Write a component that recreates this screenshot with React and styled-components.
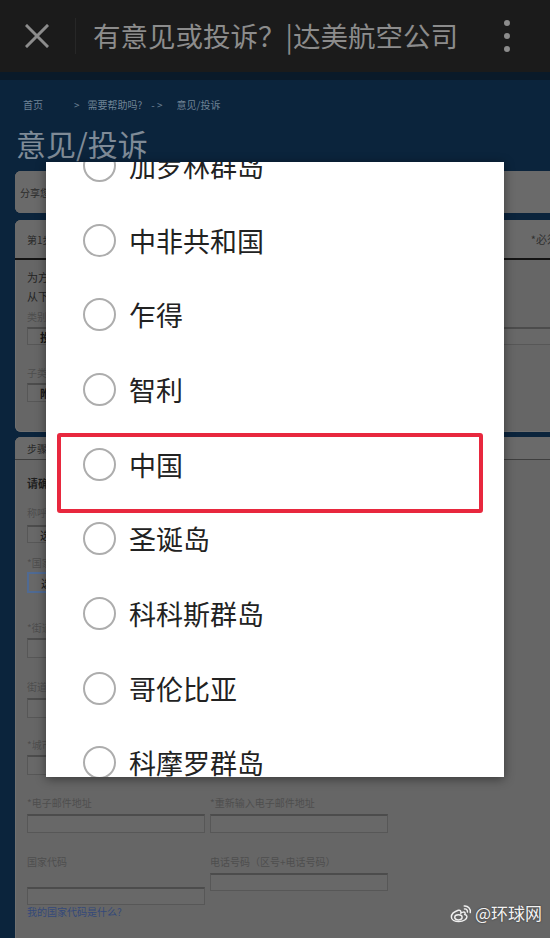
import styled, { createGlobalStyle } from "styled-components";

const GlobalStyle = createGlobalStyle`
  html, body {
    margin: 0;
    padding: 0;
  }
  body {
    font-family: "Noto Sans CJK SC", "Noto Sans", sans-serif;
    background: #0b243c;
  }
`;

const Screen = styled.div`
  position: relative;
  width: 550px;
  height: 938px;
  overflow: hidden;
  background: #0b243c;
`;

const TopBar = styled.header`
  height: 72px;
  background: #1b1b1b;
  border-bottom: 8px solid #0a1a29;
  display: flex;
  align-items: center;
`;

const CloseButton = styled.div`
  margin-left: 25px;
  width: 24px;
  height: 24px;
  display: flex;
`;

const Divider = styled.div`
  width: 1px;
  height: 36px;
  margin-left: 26px;
  background: #272727;
`;

const Title = styled.div`
  margin-left: 17px;
  font-size: 27.5px;
  line-height: 1;
  color: #8c8c8c;
  white-space: nowrap;
`;

const MenuDots = styled.div`
  margin-left: auto;
  margin-right: 40px;
  display: flex;
  flex-direction: column;
  gap: 7px;
  span {
    width: 6px;
    height: 6px;
    border-radius: 50%;
    background: #8c8c8c;
  }
`;

const Page = styled.main`
  padding-top: 18px;
`;

const Crumbs = styled.nav`
  display: flex;
  padding-left: 23px;
  font-size: 10px;
  line-height: 14px;
  color: #6f8396;
  white-space: nowrap;
`;

const Crumb = styled.span`
  margin-right: ${(p) => p.$gap || 0}px;
`;

const PageTitle = styled.h1`
  margin: 13px 0 0 16px;
  font-size: 30px;
  line-height: 36px;
  font-weight: 400;
  color: #7f8b97;
`;

const Panel = styled.section`
  margin: 10px 0 0 15px;
  width: 580px;
`;

const Card = styled.div`
  margin-top: ${(p) => p.$mt || 0}px;
  background: #666666;
  border-radius: 6px;
  box-shadow: inset 0 0 0 1px #6f6f6f;
  overflow: hidden;
`;

const CardHead = styled.div`
  height: ${(p) => p.$h}px;
  display: flex;
  align-items: center;
  justify-content: space-between;
  padding: 0 15px 0 ${(p) => p.$pad}px;
  background: #6a6a6a;
  border-bottom: ${(p) => p.$line || "none"};
  font-size: 10px;
  color: #2a2a2a;
  white-space: nowrap;
`;

const Required = styled.span`
  font-size: 11px;
  color: #303030;
`;

const CardBody = styled.div`
  padding: ${(p) => p.$pt}px 12px ${(p) => p.$pb}px 12px;
`;

const Intro = styled.p`
  margin: 0;
  font-size: 11px;
  line-height: 19px;
  color: #222;
  white-space: nowrap;
`;

const Confirm = styled.p`
  margin: 0;
  font-size: 11px;
  line-height: 16px;
  font-weight: 700;
  color: #1f1f1f;
`;

const Field = styled.div`
  margin-top: ${(p) => p.$mt}px;
`;

const Label = styled.div`
  font-size: 10px;
  line-height: 14px;
  color: #4e4e4e;
  white-space: nowrap;
`;

const Box = styled.div`
  box-sizing: border-box;
  margin-top: ${(p) => p.$mt}px;
  width: ${(p) => p.$w}px;
  height: ${(p) => p.$h}px;
  padding-left: 12px;
  display: flex;
  align-items: center;
  background: #686868;
  border: ${(p) => (p.$focus ? "2px solid #4f6a93" : "1px solid #575757")};
  border-top: ${(p) => (p.$focus ? "2px solid #4f6a93" : "2px solid #4c4c4c")};
  font-size: 11px;
  line-height: 14px;
  font-weight: ${(p) => (p.$bold ? 700 : 400)};
  color: #161616;
`;

const Row = styled.div`
  display: grid;
  grid-template-columns: 178px 178px;
  column-gap: 5px;
  margin-top: ${(p) => p.$mt}px;
`;

const HelpLink = styled.div`
  font-size: 10px;
  line-height: 14px;
  color: #34497a;
`;

const Dialog = styled.div`
  position: absolute;
  left: 46px;
  top: 162px;
  width: 458px;
  height: 615px;
  background: #ffffff;
  box-shadow: 0 2px 10px rgba(0, 0, 0, 0.45);
  overflow: hidden;
`;

const OptionList = styled.ul`
  list-style: none;
  margin: -34px 0 0;
  padding: 0;
`;

const Option = styled.li`
  height: 74.7px;
  display: flex;
  align-items: center;
`;

const Radio = styled.span`
  box-sizing: border-box;
  width: 33px;
  height: 33px;
  margin-left: 37px;
  border-radius: 50%;
  border: 2px solid #adadad;
  flex-shrink: 0;
`;

const OptionText = styled.span`
  margin-left: 13px;
  font-size: 27px;
  line-height: 1;
  color: #222;
`;

const Highlight = styled.div`
  position: absolute;
  left: 57px;
  top: 433px;
  width: 426px;
  height: 80px;
  box-sizing: border-box;
  border: 4.5px solid #e8283e;
  border-radius: 3px;
`;

const Watermark = styled.div`
  position: absolute;
  right: 8px;
  top: 901px;
  display: flex;
  align-items: center;
  gap: 3px;
  font-size: 17px;
  line-height: 24px;
  color: #f2f2f2;
  text-shadow: 0 0 2px rgba(0, 0, 0, 0.6);
`;

const countries = [
  "加罗林群岛",
  "中非共和国",
  "乍得",
  "智利",
  "中国",
  "圣诞岛",
  "科科斯群岛",
  "哥伦比亚",
  "科摩罗群岛",
];

const WeiboLogo = () => (
  <svg width="22" height="19" viewBox="0 0 24 20" fill="none" stroke="#f0f0f0" strokeWidth="1.6">
    <path d="M9 6.5C4.5 8 1.5 11 1.5 13.8c0 3 3.6 5 8.2 5 5.2 0 8.8-2.8 8.8-5.2 0-1.6-1.3-2.3-2.3-2.5.8-1.7.2-3-1.8-2.6-1.5.3-2.5 1-2.5 1 .3-2.4-.8-3.6-2.9-3z" />
    <ellipse cx="9.2" cy="14.2" rx="4" ry="2.8" />
    <path d="M15.5 1.8a6 6 0 0 1 6.6 7.2" strokeLinecap="round" />
    <path d="M15.8 5a2.8 2.8 0 0 1 3.2 3.4" strokeLinecap="round" />
  </svg>
);

export default function App() {
  return (
    <Screen>
      <GlobalStyle />
      <TopBar>
        <CloseButton>
          <svg width="24" height="24" viewBox="0 0 24 24" stroke="#8c8c8c" strokeWidth="3" strokeLinecap="square">
            <path d="M2 2L22 22M22 2L2 22" />
          </svg>
        </CloseButton>
        <Divider />
        <Title>有意见或投诉？|达美航空公司</Title>
        <MenuDots>
          <span />
          <span />
          <span />
        </MenuDots>
      </TopBar>

      <Page>
        <Crumbs>
          <Crumb $gap={31}>首页</Crumb>
          <Crumb $gap={8}>&gt;</Crumb>
          <Crumb $gap={9}>需要帮助吗?</Crumb>
          <Crumb $gap={14}>- &gt;</Crumb>
          <Crumb>意见/投诉</Crumb>
        </Crumbs>
        <PageTitle>意见/投诉</PageTitle>

        <Panel>
          <Card>
            <CardHead $h={42} $pad={5}>分享您的意见，帮助我们改进服务</CardHead>
          </Card>

          <Card $mt={7}>
            <CardHead $h={38} $pad={12} $line="2px solid #141414">
              <span>第1步：选择类别</span>
              <Required>*必须填写</Required>
            </CardHead>
            <CardBody $pt={8} $pb={30}>
              <Intro>为方便我们及时处理您的意见，</Intro>
              <Intro>从下列选项中选择最符合的类别</Intro>
              <Field $mt={4}>
                <Label>类别</Label>
                <Box $mt={3} $w={560} $h={18} $bold>投诉</Box>
              </Field>
              <Field $mt={21}>
                <Label>子类别</Label>
                <Box $mt={3} $w={300} $h={19} $bold>附加服务</Box>
              </Field>
            </CardBody>
          </Card>

          <Card $mt={5}>
            <CardHead $h={22} $pad={12} $line="1px solid #3e3e3e">
              <span>步骤2：您的联系信息</span>
            </CardHead>
            <CardBody $pt={15} $pb={40}>
              <Confirm>请确认您的联系信息</Confirm>
              <Field $mt={15}>
                <Label>称呼</Label>
                <Box $mt={5} $w={178} $h={18}>选择</Box>
              </Field>
              <Field $mt={13}>
                <Label>*国家/地区</Label>
                <Box $mt={2} $w={178} $h={21} $focus>选择</Box>
              </Field>
              <Field $mt={28}>
                <Label>*街道地址</Label>
                <Box $mt={3} $w={178} $h={20} />
              </Field>
              <Field $mt={22}>
                <Label>街道地址2</Label>
                <Box $mt={4} $w={178} $h={20} />
              </Field>
              <Field $mt={20}>
                <Label>*城市</Label>
                <Box $mt={3} $w={178} $h={20} />
              </Field>
              <Row $mt={21}>
                <div>
                  <Label>*电子邮件地址</Label>
                  <Box $mt={4} $w={178} $h={19} />
                </div>
                <div>
                  <Label>*重新输入电子邮件地址</Label>
                  <Box $mt={4} $w={178} $h={19} />
                </div>
              </Row>
              <Row $mt={22}>
                <div>
                  <Label>国家代码</Label>
                  <Box $mt={18} $w={178} $h={18} />
                  <HelpLink>我的国家代码是什么?</HelpLink>
                </div>
                <div>
                  <Label>电话号码（区号+电话号码）</Label>
                  <Box $mt={4} $w={178} $h={18} />
                </div>
              </Row>
            </CardBody>
          </Card>
        </Panel>
      </Page>

      <Dialog>
        <OptionList>
          {countries.map((name) => (
            <Option key={name}>
              <Radio />
              <OptionText>{name}</OptionText>
            </Option>
          ))}
        </OptionList>
      </Dialog>

      <Highlight />

      <Watermark>
        <WeiboLogo />
        <span>@环球网</span>
      </Watermark>
    </Screen>
  );
}
